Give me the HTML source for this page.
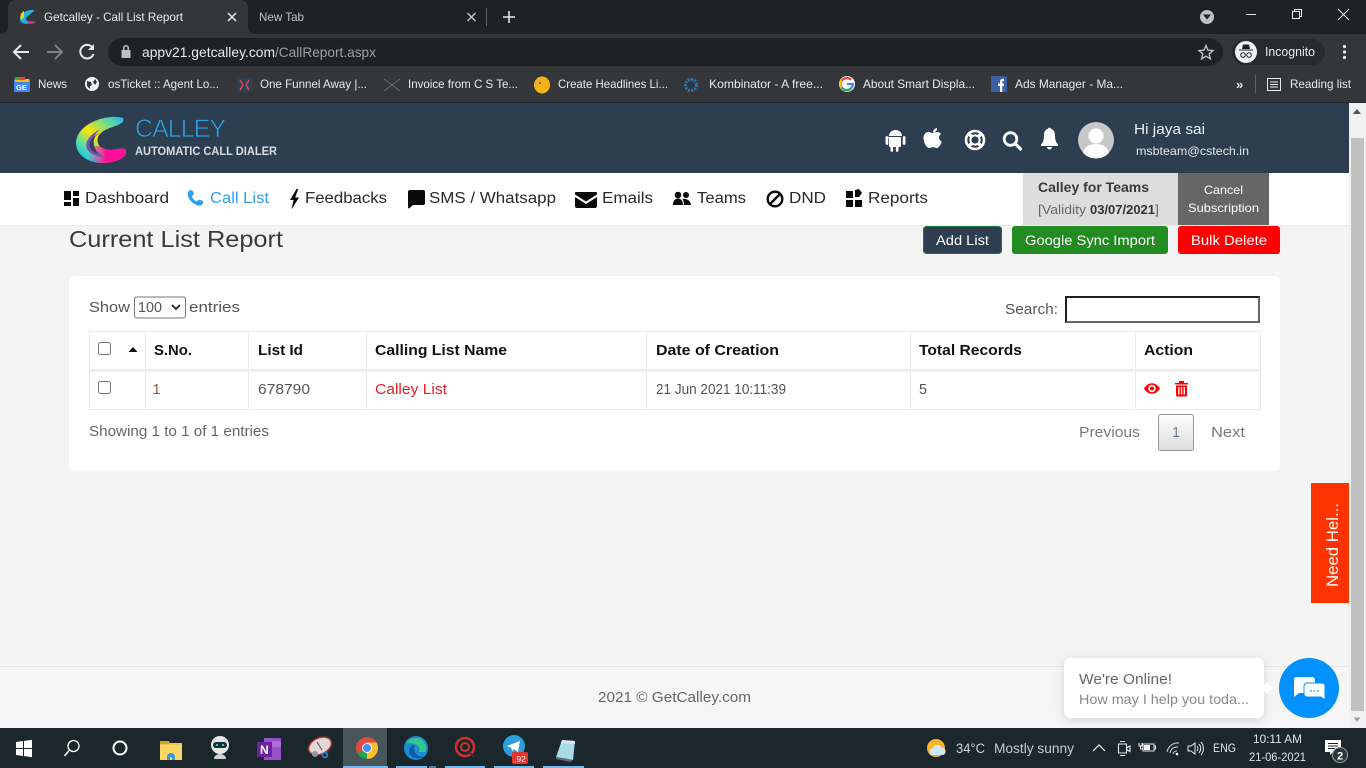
<!DOCTYPE html>
<html lang="en"><head><meta charset="utf-8"><title>Getcalley - Call List Report</title>
<style>
html,body{margin:0;padding:0;width:1366px;height:768px;overflow:hidden;background:#f4f4f4}
svg{display:block;position:absolute;left:0;top:0}
text{font-family:"Liberation Sans",sans-serif;white-space:pre}
.c text{fill:#e8eaed;font-size:12px}
.n text{fill:#2a2a2a;font-size:15.5px}
.h text{fill:#111;font-size:14.5px;font-weight:bold}
.r text{fill:#555;font-size:14.5px}
.t text{fill:#dfe3e4;font-size:12px}
</style></head><body>
<svg width="1366" height="768" viewBox="0 0 1366 768" xmlns="http://www.w3.org/2000/svg">
<defs>
<linearGradient id="lg1" gradientUnits="userSpaceOnUse" x1="122" y1="118" x2="88" y2="162"><stop offset="0" stop-color="#25b8ea"/><stop offset=".25" stop-color="#6fdc8c"/><stop offset=".55" stop-color="#ffe400"/><stop offset=".8" stop-color="#5ee0a0"/><stop offset="1" stop-color="#18c4ee"/></linearGradient>
<linearGradient id="lg2" gradientUnits="userSpaceOnUse" x1="88" y1="0" x2="106" y2="0"><stop offset="0" stop-color="#ff10a0" stop-opacity="0"/><stop offset="1" stop-color="#ff0f9a"/></linearGradient>
<linearGradient id="pg" x1="0" y1="0" x2="0" y2="1"><stop offset="0" stop-color="#fff"/><stop offset="1" stop-color="#dcdcdc"/></linearGradient>
<clipPath id="lc"><rect x="70" y="146" width="60" height="20"/></clipPath>
<path id="sw" d="M123 118C105 113 76 125 76 143C76 157 92 164 105 163C115 162 127 158 126 151C125 146 118 150 110 150C100 149 96 144 98 137C101 129 115 127 120 124Q125 121 123 118Z"/>
<filter id="sh" x="-10%" y="-20%" width="120%" height="150%"><feDropShadow dx="0" dy="2" stdDeviation="5" flood-color="#000" flood-opacity=".14"/></filter>
</defs>

<!-- browser chrome -->
<rect width="1366" height="34" fill="#202124"/>
<rect y="34" width="1366" height="69" fill="#35363a"/>
<rect y="102" width="1366" height="1" fill="#1f2a33"/>
<path d="M0 34Q8 34 8 26V8Q8 0 16 0H240Q248 0 248 8V26Q248 34 256 34Z" fill="#35363a"/>
<path d="M34 10C26 9 20 15 20 19C20 23 24 24 28 24C32 24 35 23 35 21.500C32 22 26 22 26 19C26 16 31 14 34 11Z" fill="#1fb4e0"/>
<path d="M24 11C20 13 20 17 21 20L24 17Z" fill="#f4d90e"/><path d="M27 24C31 24 35 23 35 21L29 21Z" fill="#ec1c8c"/>
<g class="c">
<text x="44" y="21" textLength="139" lengthAdjust="spacingAndGlyphs">Getcalley - Call List Report</text>
<text x="259" y="21" textLength="45" lengthAdjust="spacingAndGlyphs" style="fill:#bdc1c6">New Tab</text>
</g>
<g stroke="#e8eaed" stroke-width="1.500" fill="none"><path d="M228 13l8 8M236 13l-8 8"/><path stroke="#bdc1c6" d="M467.500 13l8 8M475.500 13l-8 8"/><path d="M509 11v12M503 17h12"/></g>
<rect x="486" y="8" width="1" height="18" fill="#5f6368"/>
<circle cx="1207" cy="17" r="7" fill="#bdc1c6"/><path d="M1203 14.500h8l-4 5z" fill="#202124"/>
<path d="M1246 14.500h10" stroke="#e8eaed" stroke-width="1"/>
<path d="M1292.500 11.500h7v7h-7zM1294.500 11.500v-2h7v7h-2" stroke="#e8eaed" fill="none"/>
<path d="M1338 9l11 11M1349 9l-11 11" stroke="#e8eaed" stroke-width="1"/>

<g stroke="#e8eaed" stroke-width="2" fill="none"><path d="M29 52H15M21 45l-7 7 7 7"/><path stroke="#7e8084" d="M47 52H61M55 45l7 7-7 7"/><path d="M92.500 47.500A6.800 6.800 0 1 0 93.500 54"/></g>
<path d="M94 44v6h-6z" fill="#e8eaed"/>
<rect x="108" y="38" width="1115" height="28" rx="14" fill="#202124"/>
<path d="M123 50v-2a3 3 0 0 1 6 0v2h1.500v8h-9v-8zm1.500 0h3v-2a1.500 1.500 0 0 0-3 0z" fill="#bdc1c6"/>
<text x="142" y="57" font-size="14" fill="#e8eaed" textLength="133" lengthAdjust="spacingAndGlyphs">appv21.getcalley.com</text>
<text x="275" y="57" font-size="14" fill="#9aa0a6" textLength="101" lengthAdjust="spacingAndGlyphs">/CallReport.aspx</text>
<path d="M1206 45.500l2 4.700 5 .4-3.800 3.300 1.200 5-4.400-2.700-4.400 2.700 1.200-5-3.800-3.300 5-.4z" fill="none" stroke="#bdc1c6" stroke-width="1.400"/>
<rect x="1232" y="39" width="93" height="26" rx="13" fill="#292a2d"/>
<circle cx="1246" cy="52" r="11" fill="#f1f3f4"/>
<path d="M1239 49.500h14v1h-14zM1242 49l1-4.500h6l1 4.500z" fill="#202124"/><circle cx="1243" cy="55" r="2.300" fill="none" stroke="#202124"/><circle cx="1249" cy="55" r="2.300" fill="none" stroke="#202124"/>
<text x="1265" y="56" font-size="12.500" fill="#e8eaed" textLength="50" lengthAdjust="spacingAndGlyphs">Incognito</text>
<g fill="#e8eaed"><circle cx="1344.500" cy="46.500" r="1.600"/><circle cx="1344.500" cy="52" r="1.600"/><circle cx="1344.500" cy="57.500" r="1.600"/></g>

<!-- bookmarks -->
<g class="c">
<text x="38" y="88" textLength="29" lengthAdjust="spacingAndGlyphs">News</text>
<text x="108" y="88" textLength="111" lengthAdjust="spacingAndGlyphs">osTicket :: Agent Lo...</text>
<text x="260" y="88" textLength="107" lengthAdjust="spacingAndGlyphs">One Funnel Away |...</text>
<text x="408" y="88" textLength="110" lengthAdjust="spacingAndGlyphs">Invoice from C S Te...</text>
<text x="558" y="88" textLength="110" lengthAdjust="spacingAndGlyphs">Create Headlines Li...</text>
<text x="709" y="88" textLength="114" lengthAdjust="spacingAndGlyphs">Kombinator - A free...</text>
<text x="863" y="88" textLength="112" lengthAdjust="spacingAndGlyphs">About Smart Displa...</text>
<text x="1015" y="88" textLength="108" lengthAdjust="spacingAndGlyphs">Ads Manager - Ma...</text>
<text x="1290" y="88" textLength="61" lengthAdjust="spacingAndGlyphs">Reading list</text>
</g>
<rect x="14" y="79" width="16" height="13" rx="1" fill="#4285f4"/><path d="M15 79h14v3H15z" fill="#fbbc04"/><path d="M15 77h5v3h-5z" fill="#34a853"/><path d="M20 77h5v3h-5z" fill="#ea4335"/>
<text x="16" y="90" font-size="7.500" font-weight="bold" fill="#fff">GE</text>
<circle cx="92" cy="84" r="7" fill="#f1f3f4"/><path d="M87 81l4 1 1 3-2 1v3l-3-3zM95 79l2 3-2 3-2-3z" fill="#35363a"/>
<rect x="237" y="78" width="15" height="14" fill="#25425a"/><path d="M240 80l3 5-3 5M249 80l-3 5 3 5" stroke="#e44" stroke-width="1.500" fill="none"/>
<path d="M384 79l8 6-8 6M400 79l-8 6 8 6" stroke="#6a6c70" fill="none"/>
<ellipse cx="542" cy="85" rx="8" ry="8.500" fill="#f6b315"/><circle cx="540" cy="83" r="1" fill="#5a4000"/>
<circle cx="691" cy="85" r="5.500" fill="none" stroke="#2977b5" stroke-width="3" stroke-dasharray="2 1.200"/><circle cx="691" cy="85" r="2.500" fill="#1d3a55"/>
<circle cx="847" cy="84" r="8" fill="#fff"/><path d="M847 84h5.800a6 6 0 1 1-1.700-4.200" fill="none" stroke="#4285f4" stroke-width="2.200"/><path d="M842 80.500a6 6 0 0 1 9-.7" fill="none" stroke="#ea4335" stroke-width="2.200"/><path d="M841.500 87.500a6 6 0 0 1 0-7" fill="none" stroke="#fbbc04" stroke-width="2.200"/><path d="M851 88.500a6 6 0 0 1-9.500-1" fill="none" stroke="#34a853" stroke-width="2.200"/>
<rect x="991" y="76" width="16" height="16" fill="#3b5fa8"/><path d="M1000 92v-6h-2v-2.500h2v-2c0-2 1.500-3 4-2.700v2.200c-1.300-.1-1.700.1-1.700 1v1.500h1.700l-.3 2.500h-1.400v6z" fill="#fff"/>
<text x="1236" y="89" font-size="13" font-weight="bold" fill="#dfe1e5">»</text>
<rect x="1255" y="75" width="1" height="18" fill="#5f6368"/>
<path d="M1267.500 78.500h13v12h-13zM1270 82h8M1270 84.500h8M1270 87h8" fill="none" stroke="#e8eaed"/>

<!-- header -->
<rect y="103" width="1349" height="70" fill="#2c3e50"/>
<use href="#sw" fill="url(#lg1)"/>
<use href="#sw" fill="url(#lg2)" clip-path="url(#lc)"/>
<path d="M101 129C90 134 84 142 87 149C90 154 97 157 104 157C97 152 92 146 94 138C95 134 98 131 101 129Z" fill="#7a4fb5"/>
<path d="M99 133C92 137 88 143 90 148C92 151 95 153 98 154C94 149 92 143 95 137Z" fill="#2c3e50" opacity=".85"/>
<text x="135" y="137" font-size="25" fill="#2aa5e6" stroke="#2c3e50" stroke-width=".7" textLength="91" lengthAdjust="spacing">CALLEY</text>
<text x="135" y="155" font-size="11.500" font-weight="bold" fill="#d8dde2" textLength="142" lengthAdjust="spacingAndGlyphs">AUTOMATIC CALL DIALER</text>

<g fill="#fff">
<path d="M889 136a6.500 6 0 0 1 13 0zM887 137h1.800a.5.5 0 0 1 .2 0h11a1 1 0 0 1 1 1v8a1 1 0 0 1-1 1h-1.500v3.500a1.300 1.300 0 0 1-2.600 0V147h-2.800v3.500a1.300 1.300 0 0 1-2.600 0V147H890a1 1 0 0 1-1-1v-8zM885.500 137.500a1.400 1.400 0 0 1 2.800 0v6a1.400 1.400 0 0 1-2.800 0zM902.700 137.500a1.400 1.400 0 0 1 2.800 0v6a1.400 1.400 0 0 1-2.800 0z"/>
<path d="M937 128c.3 2.400-1.700 4.600-4 4.500-.2-2.300 1.900-4.300 4-4.500zM941 134c-3 2-2.500 6 .8 7.500-1 3-3 6.500-5 6.500-1.300 0-2-.9-3.800-.9s-2.500.9-3.800.9c-2.500 0-5.700-5.500-5.700-10 0-4 2.700-6 5-6 1.700 0 2.900 1 4.100 1s2.500-1.100 4.400-1c1.700 0 3.200.7 4 2z"/>
<path d="M1044 135c0-3.500 2-5.800 4-6.300a1.600 1.600 0 0 1 3 0c2 .5 4 2.800 4 6.300 0 6 1.200 7.500 3 9.500v1.500h-17v-1.500c1.800-2 3-3.500 3-9.500zM1047 147h5a2.500 2.500 0 0 1-5 0z"/>
</g>
<g fill="none" stroke="#fff"><circle cx="975" cy="140" r="9" stroke-width="2.600"/><circle cx="975" cy="140" r="4.600" stroke-width="2"/><path d="M968.500 133.500l3.300 3.300M981.500 133.500l-3.300 3.300M968.500 146.500l3.300-3.300M981.500 146.500l-3.300-3.300" stroke-width="3.400"/></g>
<circle cx="1010.500" cy="139" r="6.300" fill="none" stroke="#fff" stroke-width="2.800"/><path d="M1015 143.500l5.500 5.500" stroke="#fff" stroke-width="3.200" stroke-linecap="round"/>
<circle cx="1096" cy="140" r="18" fill="#c8c8c8"/><circle cx="1096" cy="136" r="7.500" fill="#fff"/><path d="M1083 153c1-6 6-9 13-9s12 3 13 9a18 18 0 0 1-26 0z" fill="#fff"/>
<text x="1134" y="134" font-size="14.500" fill="#eef1f4" textLength="71" lengthAdjust="spacingAndGlyphs">Hi jaya sai</text>
<text x="1136" y="155" font-size="12" fill="#e4e8ec" textLength="113" lengthAdjust="spacingAndGlyphs">msbteam@cstech.in</text>

<!-- nav -->
<rect y="173" width="1349" height="52" fill="#fff"/>
<rect y="225" width="1349" height="1" fill="#ebebeb"/>
<g class="n">
<text x="85" y="203" textLength="84" lengthAdjust="spacingAndGlyphs">Dashboard</text>
<text x="210" y="203" textLength="59" lengthAdjust="spacingAndGlyphs" style="fill:#2f9ff0">Call List</text>
<text x="305" y="203" textLength="82" lengthAdjust="spacingAndGlyphs">Feedbacks</text>
<text x="429" y="203" textLength="127" lengthAdjust="spacingAndGlyphs">SMS / Whatsapp</text>
<text x="602" y="203" textLength="51" lengthAdjust="spacingAndGlyphs">Emails</text>
<text x="697" y="203" textLength="49" lengthAdjust="spacingAndGlyphs">Teams</text>
<text x="789" y="203" textLength="37" lengthAdjust="spacingAndGlyphs">DND</text>
<text x="868" y="203" textLength="60" lengthAdjust="spacingAndGlyphs">Reports</text>
</g>
<g fill="#0a0a0a">
<path d="M64 191h7v9h-7zM73 191h6v5h-6zM73 198h6v8h-6zM64 202h7v4h-7z"/>
<path d="M296.500 189l-6.500 11h3.500l-2 9.500 7.500-12h-3.800l3-8.500z"/>
<path d="M410 190h13a2 2 0 0 1 2 2v11a2 2 0 0 1-2 2h-10l-4 3.500c-.5 0-1-.5-1-1V192a2 2 0 0 1 2-2z"/>
<path d="M576 192h20a1 1 0 0 1 1 1v1.500l-11 7-11-7V193a1 1 0 0 1 1-1zM575 197l11 7 11-7v9a2 2 0 0 1-2 2h-18a2 2 0 0 1-2-2z"/>
<circle cx="678" cy="195" r="3.300"/><circle cx="686" cy="195" r="3"/><path d="M673 205c0-4 2-6.500 5-6.500s5 2.500 5 6.500zM684 205c0-2.500-.5-4.500-1.500-6 3-.7 8 .5 8.500 6z"/>
<path d="M846 198h7v-7h-7zM855 190l4-1 3 4-3 4h-4zM846 200h7v7h-7zM855 200h7v7h-7z"/>
</g>
<path d="M189.500 190.500c1.500-1 3-.5 3.500 1l.7 2c.2.800-.3 1.500-1 2l-.8.5c.6 2.500 2.500 4.500 5 5.500l.8-1c.5-.7 1.300-1 2-.8l2.200.8c1.300.5 1.700 2 .8 3.200-1.200 1.700-3 2.300-5 1.700-5-1.500-9.500-6-10-10.500-.2-1.700.5-3.300 1.800-4.400z" fill="#2f9ff0"/>
<circle cx="775" cy="199" r="7.300" fill="none" stroke="#0a0a0a" stroke-width="2.400"/><path d="M770 204l10-10" stroke="#0a0a0a" stroke-width="2.400"/>

<rect x="1023" y="173" width="155" height="52" fill="#ddd"/>
<rect x="1178" y="173" width="91" height="52" fill="#666"/>
<text x="1038" y="192" font-size="13.500" font-weight="bold" fill="#3a3a3a" textLength="111" lengthAdjust="spacingAndGlyphs">Calley for Teams</text>
<text x="1038" y="214" font-size="13" fill="#666" textLength="48" lengthAdjust="spacingAndGlyphs">[Validity</text>
<text x="1090" y="214" font-size="13" font-weight="bold" fill="#333" textLength="65" lengthAdjust="spacingAndGlyphs">03/07/2021</text>
<text x="1155" y="214" font-size="13" fill="#666" textLength="4" lengthAdjust="spacingAndGlyphs">]</text>
<text x="1204" y="194" font-size="12" fill="#fff" textLength="39" lengthAdjust="spacingAndGlyphs">Cancel</text>
<text x="1188" y="212" font-size="12" fill="#fff" textLength="71" lengthAdjust="spacingAndGlyphs">Subscription</text>

<!-- title and buttons -->
<text x="69" y="247" font-size="23" fill="#3a3a3a" textLength="214" lengthAdjust="spacingAndGlyphs">Current List Report</text>
<rect x="923.500" y="226.500" width="78" height="27" rx="3" fill="#2c3e50" stroke="#1f7a35"/>
<rect x="1012" y="226" width="156" height="28" rx="3" fill="#228b22"/>
<rect x="1178" y="226" width="102" height="28" rx="3" fill="#f00"/>
<text x="936" y="245" font-size="13.500" fill="#fff" textLength="53" lengthAdjust="spacingAndGlyphs">Add List</text>
<text x="1025" y="245" font-size="13.500" fill="#fff" textLength="130" lengthAdjust="spacingAndGlyphs">Google Sync Import</text>
<text x="1191" y="245" font-size="13.500" fill="#fff" textLength="76" lengthAdjust="spacingAndGlyphs">Bulk Delete</text>

<!-- card -->
<rect x="69" y="276" width="1211" height="195" rx="6" fill="#fff"/>
<g class="r">
<text x="89" y="312" textLength="41" lengthAdjust="spacingAndGlyphs">Show</text>
<text x="189" y="312" textLength="51" lengthAdjust="spacingAndGlyphs">entries</text>
<text x="1005" y="314" textLength="53" lengthAdjust="spacingAndGlyphs">Search:</text>
</g>
<rect x="134.500" y="297" width="51" height="21" rx="2.500" fill="#fff" stroke="#767676"/>
<text x="138" y="312" font-size="14.500" fill="#555" textLength="24" lengthAdjust="spacingAndGlyphs">100</text>
<path d="M172 305l4 4 4-4" fill="none" stroke="#222" stroke-width="1.800"/>
<rect x="1065" y="296" width="195" height="27" fill="#666"/>
<path d="M1065 296h195l-2 2h-191v23l-2 2z" fill="#1f1f1f"/>
<rect x="1067" y="298" width="191" height="23" fill="#fff"/>

<g fill="#e9ecef">
<rect x="89" y="331" width="1172" height="1"/><rect x="89" y="369" width="1172" height="2.500"/><rect x="89" y="409" width="1172" height="1"/>
<rect x="89" y="331" width="1" height="79"/><rect x="145" y="331" width="1" height="79"/><rect x="248" y="331" width="1" height="79"/><rect x="366" y="331" width="1" height="79"/><rect x="646" y="331" width="1" height="79"/><rect x="910" y="331" width="1" height="79"/><rect x="1135" y="331" width="1" height="79"/><rect x="1260" y="331" width="1" height="79"/>
</g>
<rect x="98.500" y="342.500" width="12" height="12" rx="2" fill="#fff" stroke="#767676"/>
<rect x="98.500" y="381.500" width="12" height="12" rx="2" fill="#fff" stroke="#767676"/>
<path d="M128.500 352l4.500-5 4.500 5z" fill="#111"/>
<g class="h">
<text x="154" y="355" textLength="38" lengthAdjust="spacingAndGlyphs">S.No.</text>
<text x="258" y="355" textLength="45" lengthAdjust="spacingAndGlyphs">List Id</text>
<text x="375" y="355" textLength="132" lengthAdjust="spacingAndGlyphs">Calling List Name</text>
<text x="656" y="355" textLength="123" lengthAdjust="spacingAndGlyphs">Date of Creation</text>
<text x="919" y="355" textLength="103" lengthAdjust="spacingAndGlyphs">Total Records</text>
<text x="1144" y="355" textLength="49" lengthAdjust="spacingAndGlyphs">Action</text>
</g>
<g class="r">
<text x="152.500" y="394" style="fill:#8a5a44">1</text>
<text x="258" y="394" textLength="52" lengthAdjust="spacingAndGlyphs">678790</text>
<text x="375" y="394" textLength="72" lengthAdjust="spacingAndGlyphs" style="fill:#e32222">Calley List</text>
<text x="656" y="394" textLength="130" lengthAdjust="spacingAndGlyphs">21 Jun 2021 10:11:39</text>
<text x="919" y="394" textLength="8" lengthAdjust="spacingAndGlyphs">5</text>
<text x="89" y="436" textLength="180" lengthAdjust="spacingAndGlyphs" style="fill:#666">Showing 1 to 1 of 1 entries</text>
<text x="1079" y="437" textLength="61" lengthAdjust="spacingAndGlyphs" style="fill:#7a7a7a">Previous</text>
<text x="1211" y="437" textLength="34" lengthAdjust="spacingAndGlyphs" style="fill:#7a7a7a">Next</text>
</g>
<path fill="#f00" fill-rule="evenodd" d="M1144 388.500c2-3.500 5-5.300 8-5.300s6 1.800 8 5.300c-2 3.500-5 5.300-8 5.300s-6-1.800-8-5.300zm8-3.700a3.700 3.700 0 1 0 0 7.400 3.700 3.700 0 0 0 0-7.400zm0 1.700a2 2 0 1 1 0 4 2 2 0 0 1 0-4z"/>
<path fill="#f00" fill-rule="evenodd" d="M1175 383h4v-2h5v2h4v1.500h-13zM1176 385.500h11v9.500a1.500 1.500 0 0 1-1.500 1.500h-8a1.500 1.500 0 0 1-1.500-1.500zm2.200 1.500v7.500h1.300V387zm2.700 0v7.500h1.300V387zm2.700 0v7.500h1.300V387z"/>
<rect x="1158.500" y="414.500" width="35" height="36" rx="2" fill="url(#pg)" stroke="#979797"/>
<text x="1172" y="437" font-size="14.500" fill="#6a7f96">1</text>

<!-- footer -->
<rect y="666" width="1349" height="1" fill="#e4e4e4"/>
<rect y="667" width="1349" height="61" fill="#f6f6f6"/>
<text x="598" y="702" font-size="14.500" fill="#666" textLength="153" lengthAdjust="spacingAndGlyphs">2021 © GetCalley.com</text>

<!-- need help -->
<rect x="1311" y="483" width="38" height="120" fill="#f30"/>
<text transform="translate(1338 587) rotate(-90)" font-size="17" fill="#fff" textLength="84" lengthAdjust="spacingAndGlyphs">Need Hel...</text>

<!-- chat -->
<rect x="1064" y="658" width="200" height="60" rx="7" fill="#fff" filter="url(#sh)"/>
<path d="M1261 688l6-6 6 6-6 6z" fill="#fff"/>
<text x="1079" y="684" font-size="15" fill="#666" textLength="93" lengthAdjust="spacingAndGlyphs">We're Online!</text>
<text x="1079" y="704" font-size="13.500" fill="#888" textLength="170" lengthAdjust="spacingAndGlyphs">How may I help you toda...</text>
<circle cx="1309" cy="688" r="30" fill="#0091ff"/>
<path d="M1296 677h16a3 3 0 0 1 3 3v10a3 3 0 0 1-3 3h-13l-5 4v-17a3 3 0 0 1 2-3z" fill="#fff"/>
<path d="M1307 683h15a3 3 0 0 1 3 3v14l-4-3h-14a3 3 0 0 1-3-3v-8a3 3 0 0 1 3-3z" fill="#fff" stroke="#0091ff" stroke-width="1"/>
<g fill="#55b5ff"><circle cx="1311" cy="691" r="1"/><circle cx="1314.500" cy="691" r="1"/><circle cx="1318" cy="691" r="1"/></g>

<!-- scrollbar -->
<rect x="1349" y="103" width="17" height="625" fill="#f1f1f1"/>
<rect x="1351" y="138" width="13" height="573" fill="#c1c1c1"/>
<path d="M1353.500 722.500h7l-3.500-4.500z" transform="rotate(180 1357 720)" fill="#a3a3a3"/><path d="M1353 114h8l-4-5z" fill="#505050"/>

<!-- taskbar -->
<rect y="728" width="1366" height="40" fill="#1a282e"/>
<rect x="343" y="728" width="45" height="40" fill="#46565b"/>
<rect x="387" y="728" width="1" height="40" fill="#101c20"/>
<g fill="#76b9ed"><rect x="343" y="766" width="45" height="2"/><rect x="396" y="766" width="31" height="2"/><rect x="429" y="766" width="7" height="2" opacity=".6"/><rect x="445" y="766" width="40" height="2"/><rect x="494" y="766" width="40" height="2"/><rect x="543" y="766" width="41" height="2"/></g>
<path d="M16 742l7-1v7h-7zM24 741l8-1.200V748h-8zM16 749h7v7l-7-1zM24 749h8v8.200l-8-1.200z" fill="#fff"/>
<circle cx="73.500" cy="746" r="5.500" fill="none" stroke="#fff" stroke-width="1.300"/><path d="M69.500 750l-5 6" stroke="#fff" stroke-width="1.500"/>
<circle cx="120" cy="748" r="6.500" fill="none" stroke="#fff" stroke-width="2"/>
<path d="M160 741h8l2 2h12v17h-22z" fill="#f3c74d"/><path d="M160 745h22v15h-22z" fill="#fbd768"/><path d="M167 757a4 4 0 0 1 8 0v3h-3v-3h-2v3h-3z" fill="#3b96dc"/><path d="M160 741h9v3h-9z" fill="#d9a021"/>
<ellipse cx="220" cy="745" rx="9" ry="9" fill="#e5e8e8"/><rect x="213" y="742" width="14" height="6" rx="3" fill="#173136"/><circle cx="217" cy="745" r="1" fill="#2fd"/><circle cx="223" cy="745" r="1" fill="#2fd"/><path d="M214 759c0-3 3-5 6-5s6 2 6 5z" fill="#d0d4d4"/>
<rect x="264" y="738" width="17" height="22" fill="#9a4fc6"/><rect x="272" y="741" width="9" height="6" fill="#b26ad8"/><rect x="257" y="742" width="15" height="15" fill="#6a23a0"/>
<text x="260" y="754" font-size="12" font-weight="bold" fill="#fff">N</text>
<ellipse cx="320" cy="746" rx="12" ry="8" transform="rotate(-25 320 746)" fill="#e3d8d8" stroke="#b9322c" stroke-width="1.500"/><path d="M317 742l5 8" stroke="#555"/><circle cx="325" cy="755" r="2.500" fill="none" stroke="#2a8ad5" stroke-width="1.500"/><circle cx="315" cy="754" r="3" fill="#8a9aa0"/>
<circle cx="367" cy="748" r="11" fill="#dd4b3e"/><path d="M367 748l-9.500 5.500A11 11 0 0 0 367 759z" fill="#22a24a"/><path d="M367 748v11a11 11 0 0 0 9.500-16.500H367z" fill="#fbc02d"/><path d="M358 742a11 11 0 0 0-.5 11.500l5-8.500z" fill="#dd4b3e"/><circle cx="367" cy="748" r="5" fill="#fff"/><circle cx="367" cy="748" r="4" fill="#4c8bf5"/>
<circle cx="416" cy="748" r="12" fill="#1b8bd0"/><path d="M406 744c3-7 14-8 18-2 3 4 3 8 1 10h-7c2-1 2-4 0-6-3-3-9-4-12-2z" fill="#37c790"/><path d="M410 754c-2-4 0-9 5-9-2 3-1 9 4 11 3 1 5 1 6 0-3 3-11 4-15-2z" fill="#0f5aa8"/>
<circle cx="465" cy="747" r="9" fill="none" stroke="#d1322c" stroke-width="2.500"/><circle cx="465" cy="747" r="4" fill="none" stroke="#d1322c" stroke-width="2"/><path d="M469 752l5 5" stroke="#5a2a2a" stroke-width="2"/>
<circle cx="514" cy="746" r="11" fill="#2f9fdc"/><path d="M507 746l13-5-2 11-4-3-2 2-.5-3z" fill="#fff"/>
<rect x="512" y="752" width="16" height="12" rx="2" fill="#e5352e"/><text x="514" y="762" font-size="8.500" fill="#fff">.92</text>
<path d="M556 757l6-17 13 1-2 19z" fill="#a8dbe8"/><path d="M556 757l17 3-3 2-14-3z" fill="#667"/><path d="M562 740l13 1v3l-14-1z" fill="#e0e6e8"/>

<!-- tray -->
<circle cx="936" cy="748" r="9" fill="#f8b42a"/><path d="M932 755a3.500 3.500 0 0 1 1-6.800 4.500 4.500 0 0 1 8.500-.5 3.600 3.600 0 0 1 4 3.700 3.500 3.500 0 0 1-2.500 3.600z" fill="#cfe6f5"/>
<text x="956" y="753" font-size="13.500" fill="#d0d4d5" textLength="29" lengthAdjust="spacingAndGlyphs">34°C</text>
<text x="994" y="753" font-size="13.500" fill="#c8cccd" textLength="80" lengthAdjust="spacingAndGlyphs">Mostly sunny</text>
<path d="M1093 751l6-6 6 6" fill="none" stroke="#fff" stroke-width="1.200"/>
<path d="M1118.500 744h8v9h-8zM1126.500 748l3.500-2v5.500l-3.500-2zM1120 741.500h5M1120 755.500h5" fill="none" stroke="#e8e8e8" stroke-width="1.100"/>
<path d="M1143 744h11v7h-11zM1154 746h1.500v3H1154z" fill="none" stroke="#e8e8e8"/><rect x="1144" y="745" width="6" height="5" fill="#fff"/><path d="M1139 743v3h3v-3M1140.500 746v3h3" fill="none" stroke="#fff"/>
<path d="M1167 752a11 11 0 0 1 12-9M1170 753a7 7 0 0 1 8-6M1173 754a4 4 0 0 1 4-3" fill="none" stroke="#c5c9ca" stroke-width="1.100"/><circle cx="1177" cy="754" r="1.300" fill="#fff"/>
<path d="M1188 746h3l4-3v11l-4-3h-3z" fill="none" stroke="#e8e8e8"/><path d="M1197 746a4 4 0 0 1 0 5M1199 744a7 7 0 0 1 0 9M1201 742a10 10 0 0 1 0 13" fill="none" stroke="#e8e8e8"/>
<g class="t">
<text x="1213" y="752" textLength="23" lengthAdjust="spacingAndGlyphs">ENG</text>
<text x="1253" y="743" textLength="49" lengthAdjust="spacingAndGlyphs">10:11 AM</text>
<text x="1249" y="761" textLength="57" lengthAdjust="spacingAndGlyphs">21-06-2021</text>
</g>
<path d="M1325 740h16v12h-8l-3 3v-3h-5z" fill="#fff"/><path d="M1328 743.500h10M1328 746h10M1328 748.500h7" stroke="#1a282e"/>
<circle cx="1340" cy="755" r="7.500" fill="#2b373b" stroke="#9aa2a4"/><text x="1337" y="759.500" font-size="11" font-weight="bold" fill="#fff">2</text>
</svg>
</body></html>
